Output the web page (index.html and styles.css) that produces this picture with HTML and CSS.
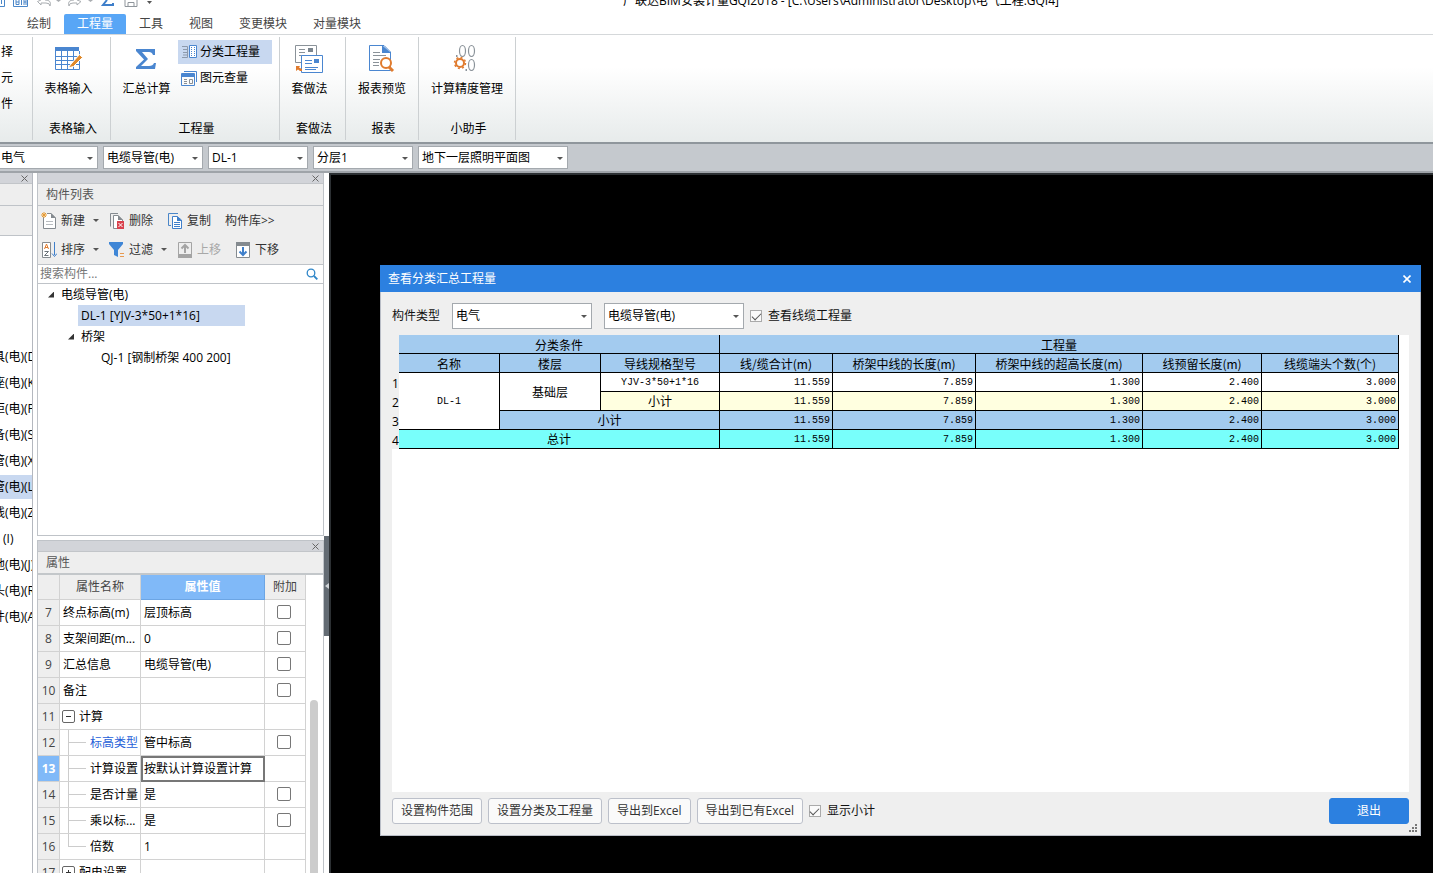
FILE: index.html
```html
<!DOCTYPE html>
<html lang="zh-CN">
<head>
<meta charset="utf-8">
<title>广联达BIM安装计量GQI2018</title>
<link rel="stylesheet" href="styles.css">
</head>
<body>
<header class="titlebar">
  <div class="quick">
    <svg width="160" height="12" viewBox="0 0 160 12" fill="none">
      <path d="M0 6.500H4.500V0M1.500 0V4" stroke="#4a86c8"/>
      <path d="M13.500 0V6.500H27.500V0" stroke="#4a86c8"/>
      <path d="M16 0V4.500H19V0M21.500 0V5M24 5V0M26 5V0M16 2H19M24 2H26" stroke="#4a86c8"/>
      <path d="M41 0L37.500 1.500L41 5V3H46Q50 3 50 6Q52 0 45 0" stroke="#a9adb1"/>
      <path d="M56 0H61L58.500 2ZM88 0H93L90.500 2Z" fill="#a9adb1"/>
      <path d="M77 0L81 1.500L77 5V3H73Q69 3 69 6Q67 0 74 0" stroke="#a9adb1"/>
      <path d="M107 0L103 5H113V3" stroke="#3f7fca" stroke-width="2"/>
      <path d="M125 0V6.500H137V0M128 6V2.500H134V6" stroke="#8f959b"/>
      <path d="M147 1H152L149.500 4Z" fill="#555"/>
    </svg>
  </div>
  <div class="title">广联达BIM安装计量GQI2018 - [C:\Users\Administrator\Desktop\电气工程.GQI4]</div>
</header>

<nav class="tabs">
  <button class="tab">绘制</button>
  <button class="tab active">工程量</button>
  <button class="tab">工具</button>
  <button class="tab">视图</button>
  <button class="tab">变更模块</button>
  <button class="tab">对量模块</button>
</nav>

<section class="ribbon">
  <div class="group g-edge">
    <button class="cut">择</button>
    <button class="cut">元</button>
    <button class="cut">件</button>
  </div>
  <div class="group g-form">
    <button class="big">
      <svg width="30" height="30" viewBox="0 0 30 30" fill="none">
        <path d="M2 3H26V7H2Z" fill="#4a86d0"/>
        <path d="M2.500 7V25.500H26.500V7M2 12.500H26M2 16.500H26M2 20.500H26M8.500 7V25M14.500 7V25M20.500 7V25" stroke="#4a86d0"/>
        <path d="M18 20L26.500 10.500L29.500 13.500L20.500 22.500L15 24Z" fill="#e08a2c" stroke="#fff"/>
      </svg>
      <span>表格输入</span>
    </button>
    <div class="group-name">表格输入</div>
  </div>
  <div class="group g-quantity">
    <div class="group-body">
      <button class="big">
        <svg width="30" height="30" viewBox="0 0 30 30"><path d="M4 5H23V11H21Q20 8 17 8H10L16 15L9 22H17Q21 22 22 19H24L23 25H4V23L12 15.500L4 7Z" fill="#4a86d0"/></svg>
        <span>汇总计算</span>
      </button>
      <div class="stack">
        <button class="small active">
          <svg width="16" height="16" viewBox="0 0 16 16" fill="none">
            <path d="M1 2.500H6.500V13.500H1M2 5.500H6M2 8.500H6M2 11H6" stroke="#8c99ab"/>
            <path d="M8.500 1.500H15.500V13.500H8.500Z" fill="#fff" stroke="#4a86d0"/>
            <path d="M10.500 3V13M13.500 3V13" stroke="#4a86d0" stroke-dasharray="1 1"/>
          </svg>
          <span>分类工程量</span>
        </button>
        <button class="small">
          <svg width="16" height="16" viewBox="0 0 16 16" fill="none">
            <path d="M3 1.500H15.500V12" stroke="#4a86d0"/>
            <path d="M.5 3.500H13.500V15.500H.5ZM1 5H13" stroke="#4a86d0"/>
            <path d="M1 4H13V7H1Z" fill="#4a86d0"/>
            <path d="M3 9.500H6M3 11.500H6M3 13.500H6M8.500 9.500H11.500V13.500H8.500Z" stroke="#8a8f94"/>
          </svg>
          <span>图元查量</span>
        </button>
      </div>
    </div>
    <div class="group-name">工程量</div>
  </div>
  <div class="group g-method">
    <button class="big">
      <svg width="30" height="30" viewBox="0 0 30 30" fill="none">
        <path d="M1.500 1.500H22.500V18.500H1.500Z" fill="#fff" stroke="#8a9299"/>
        <path d="M5 5.500H11M5 8.500H11M5 11.500H8" stroke="#8a9299"/>
        <path d="M14 4H19V8H14Z" fill="#7b858e"/>
        <path d="M7.500 11.500H28.500V28.500H7.500Z" fill="#fff" stroke="#4a86d0"/>
        <path d="M11 16.500H18M11 19.500H18M11 23.500H24M11 25.500H22" stroke="#4a86d0"/>
        <path d="M20 15H25V19H20Z" fill="#4a86d0"/>
        <path d="M2 22H6L5 23.500L8 25V27H6L4 25.500L2 27Z" fill="#e07b2e"/>
      </svg>
      <span>套做法</span>
    </button>
    <div class="group-name">套做法</div>
  </div>
  <div class="group g-report">
    <button class="big">
      <svg width="30" height="30" viewBox="0 0 30 30" fill="none">
        <path d="M2.500 1.500H17L23.500 8V26.500H2.500Z" fill="#fff" stroke="#4a86d0"/>
        <path d="M15 1L24 9H15Z" fill="#4a86d0"/>
        <path d="M6 8.500H13M6 11.500H19M6 15.500H13M6 18.500H12M6 21.500H12" stroke="#8a9299"/>
        <circle cx="19" cy="19" r="5" fill="#fff" stroke="#e07b2e" stroke-width="2"/>
        <path d="M22 23L26 27" stroke="#e07b2e" stroke-width="3"/>
      </svg>
      <span>报表预览</span>
    </button>
    <div class="group-name">报表</div>
  </div>
  <div class="group g-helper">
    <button class="big">
      <svg width="30" height="30" viewBox="0 0 30 30" fill="none">
        <path d="M4 11H5.500V13H4ZM13.500 25H15V27H13.500Z" fill="#8a9299"/>
        <ellipse cx="10.500" cy="7" rx="3" ry="5.500" stroke="#8a9299" stroke-width="1.200"/>
        <ellipse cx="19.500" cy="7" rx="3" ry="5.500" stroke="#8a9299" stroke-width="1.200"/>
        <ellipse cx="19.500" cy="21" rx="3" ry="5.500" stroke="#8a9299" stroke-width="1.200"/>
        <circle cx="8" cy="19" r="4" stroke="#e07b2e" stroke-width="2"/>
        <circle cx="8" cy="19" r="5.500" stroke="#e07b2e" stroke-width="1.500" stroke-dasharray="2 2.300"/>
      </svg>
      <span>计算精度管理</span>
    </button>
    <div class="group-name">小助手</div>
  </div>
</section>

<div class="combobar">
  <span class="combo first"><select aria-label="专业"><option>电气</option></select></span>
  <span class="combo"><select aria-label="构件类型"><option>电缆导管(电)</option></select></span>
  <span class="combo"><select aria-label="构件"><option>DL-1</option></select></span>
  <span class="combo"><select aria-label="分层"><option>分层1</option></select></span>
  <span class="combo wide"><select aria-label="图纸"><option>地下一层照明平面图</option></select></span>
</div>

<main class="workspace">
  <aside class="rail">
    <div class="dock-bar"><button class="dock-close" aria-label="关闭"><svg width="7" height="7" viewBox="0 0 7 7"><path d="M.5 .5L6.500 6.500M6.500 .5L.5 6.500" stroke="#666"/></svg></button></div>
    <div class="rail-title"></div>
    <div class="rail-tools"></div>
    <ul class="rail-list">
      <li>具(电)(D)</li>
      <li>座(电)(K)</li>
      <li>柜(电)(P)</li>
      <li>备(电)(S)</li>
      <li>管(电)(X)</li>
      <li class="selected">管(电)(L)</li>
      <li>线(电)(Z)</li>
      <li class="short">(I)</li>
      <li>地(电)(J)</li>
      <li>头(电)(R)</li>
      <li>件(电)(A)</li>
    </ul>
  </aside>

  <div class="docks">
    <section class="panel components">
      <div class="dock-bar"><button class="dock-close" aria-label="关闭"><svg width="7" height="7" viewBox="0 0 7 7"><path d="M.5 .5L6.500 6.500M6.500 .5L.5 6.500" stroke="#666"/></svg></button></div>
      <h2 class="panel-title">构件列表</h2>
      <div class="tools">
        <button class="tool t-wide">
          <svg width="16" height="18" viewBox="0 0 16 18" fill="none">
            <path d="M2.500 5V16.500H14.500V6L10 1.500H6" fill="#fff" stroke="#858b90"/>
            <path d="M10 1V6H15Z" fill="#858b90"/><path d="M5 9.500H12M5 12.500H12" stroke="#b8bcc0"/>
            <path d="M3 0V6M0 3H6M1 1L5 5M5 1L1 5" stroke="#e89a30"/>
          </svg>
          <span>新建</span><i class="arrow"></i>
        </button>
        <button class="tool">
          <svg width="16" height="18" viewBox="0 0 16 18" fill="none">
            <path d="M1.500 14.500V1.500H9" stroke="#858b90"/>
            <path d="M4.500 3.500H9L13.500 8V16.500H4.500Z" fill="#fff" stroke="#858b90"/>
            <path d="M9 3V8H14Z" fill="#858b90"/>
            <path d="M8 9H15V17H8Z" fill="#d9424d"/><path d="M9.500 11L13.500 15M13.500 11L9.500 15" stroke="#fff"/>
          </svg>
          <span>删除</span>
        </button>
        <button class="tool t-copy">
          <svg width="16" height="18" viewBox="0 0 16 18" fill="none">
            <path d="M4 13.500H1.500V1.500H11" stroke="#4a86c8"/>
            <path d="M5.500 4.500H10L14.500 8V16.500H5.500Z" fill="#fff" stroke="#3f7fca"/>
            <path d="M10 4V9H15Z" fill="#3f7fca"/><path d="M7 10.500H13M7 12.500H13M7 14.500H13" stroke="#3f7fca"/>
          </svg>
          <span>复制</span>
        </button>
        <button class="tool">构件库&gt;&gt;</button>
      </div>
      <div class="tools">
        <button class="tool t-wide">
          <svg width="16" height="18" viewBox="0 0 16 18" fill="none">
            <path d="M1.500 1.500H9.500V16.500H1.500Z" fill="#fff" stroke="#858b90"/>
            <path d="M3.500 8L5.500 3L7.500 8M4 6.500H7" stroke="#e07b2e"/><path d="M3.500 10.500H7.500L3.500 14.500H7.500" stroke="#6d747a"/>
            <path d="M13.500 1V14M11 12.500L13.500 15.500L16 12.500" stroke="#3f7fca"/>
          </svg>
          <span>排序</span><i class="arrow"></i>
        </button>
        <button class="tool t-filter">
          <svg width="16" height="18" viewBox="0 0 16 18" fill="none">
            <path d="M0 1H14V3L9 9V16L5 14V9L0 3Z" fill="#3f86d6"/><path d="M11 12.500H15M11 15.500H15" stroke="#e89a50"/>
          </svg>
          <span>过滤</span><i class="arrow"></i>
        </button>
        <button class="tool t-up" disabled>
          <svg width="16" height="18" viewBox="0 0 16 18" fill="none">
            <path d="M1.500 1.500H14.500V14H1.500Z" stroke="#a4a4a4"/><path d="M1 13H15V17H1Z" fill="#a4a4a4"/>
            <path d="M8 12V4M4.500 7.500L8 4L11.500 7.500" stroke="#a4a4a4" stroke-width="2"/>
          </svg>
          <span>上移</span>
        </button>
        <button class="tool">
          <svg width="16" height="18" viewBox="0 0 16 18" fill="none">
            <path d="M1.500 3.500H14.500V16.500H1.500Z" fill="#fff" stroke="#858b90"/><path d="M1 1H15V5H1Z" fill="#858b90"/>
            <path d="M8 6V14M4.500 10.500L8 14L11.500 10.500" stroke="#3f7fca" stroke-width="2"/>
          </svg>
          <span>下移</span>
        </button>
      </div>
      <label class="search">
        <input type="text" placeholder="搜索构件..." aria-label="搜索构件">
        <svg width="12" height="12" viewBox="0 0 12 12" fill="none"><circle cx="5" cy="5" r="3.800" stroke="#2f86c8" stroke-width="1.300"/><path d="M8 8L11.300 11.300" stroke="#2f86c8" stroke-width="1.800"/></svg>
      </label>
      <ul class="tree">
        <li class="lv1"><i class="fold"></i><span>电缆导管(电)</span></li>
        <li class="lv2"><span class="picked">DL-1 [YJV-3*50+1*16]</span></li>
        <li class="lv2b"><i class="fold"></i><span>桥架</span></li>
        <li class="lv3"><span>QJ-1 [钢制桥架 400 200]</span></li>
      </ul>
    </section>

    <section class="panel props">
      <div class="dock-bar"><button class="dock-close" aria-label="关闭"><svg width="7" height="7" viewBox="0 0 7 7"><path d="M.5 .5L6.500 6.500M6.500 .5L.5 6.500" stroke="#666"/></svg></button></div>
      <h2 class="panel-title">属性</h2>
      <div class="props-body">
        <table class="grid">
          <colgroup><col class="c-num"><col class="c-name"><col class="c-value"><col class="c-extra"></colgroup>
          <thead><tr><th></th><th>属性名称</th><th class="hot">属性值</th><th>附加</th></tr></thead>
          <tbody>
            <tr><th>7</th><td>终点标高(m)</td><td>层顶标高</td><td class="tick"><input type="checkbox" aria-label="终点标高附加"></td></tr>
            <tr><th>8</th><td>支架间距(m...</td><td>0</td><td class="tick"><input type="checkbox" aria-label="支架间距附加"></td></tr>
            <tr><th>9</th><td>汇总信息</td><td>电缆导管(电)</td><td class="tick"><input type="checkbox" aria-label="汇总信息附加"></td></tr>
            <tr><th>10</th><td>备注</td><td></td><td class="tick"><input type="checkbox" aria-label="备注附加"></td></tr>
            <tr><th>11</th><td><div class="node"><button class="toggle minus" aria-label="折叠"></button>计算</div></td><td></td><td></td></tr>
            <tr><th>12</th><td class="link"><div class="node"><i class="branch"></i>标高类型</div></td><td>管中标高</td><td class="tick"><input type="checkbox" aria-label="标高类型附加"></td></tr>
            <tr><th class="hot">13</th><td><div class="node"><i class="branch"></i>计算设置</div></td><td class="focus">按默认计算设置计算</td><td></td></tr>
            <tr><th>14</th><td><div class="node"><i class="branch"></i>是否计量</div></td><td>是</td><td class="tick"><input type="checkbox" aria-label="是否计量附加"></td></tr>
            <tr><th>15</th><td><div class="node"><i class="branch"></i>乘以标...</div></td><td>是</td><td class="tick"><input type="checkbox" aria-label="乘以标附加"></td></tr>
            <tr><th>16</th><td><div class="node"><i class="branch last"></i>倍数</div></td><td>1</td><td></td></tr>
            <tr><th>17</th><td><div class="node"><button class="toggle plus" aria-label="展开"></button>配电设置</div></td><td></td><td></td></tr>
          </tbody>
        </table>
        <div class="scroll"><div class="thumb"></div></div>
      </div>
    </section>
  </div>

  <div class="splitter"><div class="grip"></div></div>

  <div class="canvas">
    <section class="dialog" role="dialog" aria-labelledby="dlg-title">
      <header class="dialog-head">
        <h1 id="dlg-title">查看分类汇总工程量</h1>
        <button class="dialog-close" aria-label="关闭"><svg width="8" height="8" viewBox="0 0 8 8"><path d="M.5 .5L7.500 7.500M7.500 .5L.5 7.500" stroke="#fff" stroke-width="1.600"/></svg></button>
      </header>
      <div class="filters">
        <label for="kind">构件类型</label>
        <span class="combo tall major"><select id="kind"><option>电气</option></select></span>
        <span class="combo tall"><select aria-label="构件"><option>电缆导管(电)</option></select></span>
        <label class="check"><input type="checkbox" checked><span>查看线缆工程量</span></label>
      </div>
      <div class="sheet">
        <table class="report">
          <colgroup><col class="r-num"><col class="r-a"><col class="r-a"><col class="r-b"><col class="r-c"><col class="r-d"><col class="r-e"><col class="r-b"><col class="r-f"></colgroup>
          <thead>
            <tr><td class="no"></td><th colspan="3">分类条件</th><th colspan="5">工程量</th></tr>
            <tr><td class="no"></td><th>名称</th><th>楼层</th><th>导线规格型号</th><th>线/缆合计(m)</th><th>桥架中线的长度(m)</th><th>桥架中线的超高长度(m)</th><th>线预留长度(m)</th><th>线缆端头个数(个)</th></tr>
          </thead>
          <tbody>
            <tr><td class="no">1</td><td class="mono" rowspan="3">DL-1</td><td rowspan="2">基础层</td><td class="mono">YJV-3*50+1*16</td><td class="n">11.559</td><td class="n">7.859</td><td class="n">1.300</td><td class="n">2.400</td><td class="n">3.000</td></tr>
            <tr class="sub"><td class="no">2</td><td>小计</td><td class="n">11.559</td><td class="n">7.859</td><td class="n">1.300</td><td class="n">2.400</td><td class="n">3.000</td></tr>
            <tr class="floor"><td class="no">3</td><td colspan="2">小计</td><td class="n">11.559</td><td class="n">7.859</td><td class="n">1.300</td><td class="n">2.400</td><td class="n">3.000</td></tr>
            <tr class="total"><td class="no">4</td><td colspan="3">总计</td><td class="n">11.559</td><td class="n">7.859</td><td class="n">1.300</td><td class="n">2.400</td><td class="n">3.000</td></tr>
          </tbody>
        </table>
      </div>
      <footer class="actions">
        <button class="btn">设置构件范围</button>
        <button class="btn">设置分类及工程量</button>
        <button class="btn">导出到Excel</button>
        <button class="btn">导出到已有Excel</button>
        <label class="check"><input type="checkbox" checked><span>显示小计</span></label>
        <button class="btn primary">退出</button>
      </footer>
      <svg class="resize" width="8" height="8" viewBox="0 0 8 8" fill="#777"><path d="M6 0h2v2h-2zM3 3h2v2h-2zM6 3h2v2h-2zM0 6h2v2h-2zM3 6h2v2h-2zM6 6h2v2h-2z"/></svg>
    </section>
  </div>
</main>
</body>
</html>
```
FILE: styles.css
```css
* { box-sizing: border-box; }

body {
  margin: 0;
  height: 100vh;
  overflow: hidden;
  display: flex;
  flex-direction: column;
  background: #fff;
  color: #1a1a1a;
  font: 12px/18px "Open Sans", "Noto Sans CJK SC", sans-serif;
}

button, input, select {
  font: inherit;
  color: inherit;
  margin: 0;
  padding: 0;
  border: 0;
  background: none;
}

h1, h2 { margin: 0; font-size: 12px; font-weight: 400; }
ul { margin: 0; padding: 0; list-style: none; }
svg { display: block; flex: none; }

/* title bar and tabs */
.titlebar { display: flex; height: 14px; overflow: hidden; flex: none; }
.quick { width: 623px; flex: none; }
.title { margin-top: -8px; white-space: nowrap; color: #000; }

.tabs { display: flex; flex: none; padding-left: 14px; border-bottom: 1px solid #d5d8da; }
.tab { height: 20px; padding: 0 13px; line-height: 20px; color: #444; }
.tab.active { background: #58a6f6; color: #fff; border-radius: 2px 2px 0 0; }

/* ribbon */
.ribbon {
  display: flex;
  flex: none;
  height: 109px;
  padding: 2px 0;
  background: linear-gradient(#fff 30%, #e7ebeb);
  border-bottom: 2px solid #8f969c;
  color: #000;
}
.group {
  display: flex;
  flex-direction: column;
  justify-content: space-between;
  align-items: center;
  border-right: 1px solid #ccd0d2;
}
.group-body { display: flex; align-self: flex-start; }
.group-name { height: 20px; line-height: 18px; padding-left: 3px; }
.big { display: flex; flex-direction: column; align-items: center; padding-top: 7px; gap: 6px; }
.g-edge { width: 33px; align-items: flex-start; justify-content: flex-start; gap: 8px; padding-top: 6px; }
.cut { height: 18px; margin-left: 1px; }
.g-form { width: 78px; }
.g-form .big { margin-right: 6px; }
.g-quantity { width: 169px; }
.g-quantity .big { width: 67px; padding-left: 4px; }
.g-method { width: 66px; }
.g-method .big { margin-right: 6px; }
.g-report { width: 73px; }
.g-helper { width: 97px; }
.stack { display: flex; flex-direction: column; padding-top: 3px; gap: 2px; width: 94px; }
.small { display: flex; align-items: center; height: 24px; padding-left: 3px; gap: 3px; }
.small.active { background: #c8d8f0; }

/* drop-downs */
.combobar {
  display: flex;
  flex: none;
  gap: 5px;
  padding: 2px 0;
  background: #c5c9ce;
  border-bottom: 2px solid #9fa4a9;
}
.combo { position: relative; width: 100px; height: 23px; border: 1px solid #a4a9ae; background: #fff; color: #000; }
.combo.first { width: 98px; border-left: 0; }
.combo.wide { width: 150px; }
.combo select { display: block; width: 100%; height: 100%; padding-left: 3px; appearance: none; outline: 0; }
.combo.first select { padding-left: 1px; }
.combo::after {
  content: "";
  position: absolute;
  right: 4px;
  top: calc(50% - 1px);
  border: 3px solid transparent;
  border-top-color: #555;
  border-bottom: 0;
}
.combo.tall { width: 140px; height: 26px; }
.combo.major { margin-right: 6px; }

/* docked panels */
.workspace { display: flex; flex: 1; min-height: 0; }
.dock-bar { display: flex; justify-content: flex-end; height: 11px; flex: none; background: #d2d4d9; border-bottom: 1px solid #c2c5c9; }
.dock-close { display: grid; place-items: center; width: 16px; }
.rail { width: 33px; flex: none; overflow: hidden; border-right: 1px solid #b4b8bf; color: #000; }
.rail-title { height: 22px; background: #eee; border-bottom: 1px solid #bfc3c8; }
.rail-tools { height: 30px; background: #eee; border-bottom: 1px solid #bfc3c8; }
.rail-list { padding-top: 109px; }
.rail-list li { height: 24px; line-height: 24px; margin-bottom: 2px; text-indent: -7px; white-space: nowrap; }
.rail-list .short { text-indent: 3px; }
.rail-list .selected { background: #c8d8f0; }

.docks { display: flex; flex-direction: column; width: 287px; margin-left: 4px; flex: none; gap: 4px; }
.panel { display: flex; flex-direction: column; border: 1px solid #bfc3c8; border-top: 0; }
.components { height: 363px; flex: none; background: #eee; }
.props { flex: 1; min-height: 0; border-top: 1px solid #bfc3c8; border-bottom: 0; }
.panel-title { flex: none; height: 22px; padding-left: 8px; line-height: 21px; background: #eee; color: #555; border-bottom: 1px solid #bfc3c8; }
.props .panel-title { height: 23px; border-bottom: 2px solid #c3c7ca; }

.tools { display: flex; align-items: center; height: 29px; padding-left: 3px; color: #333; }
.tool { display: flex; align-items: center; gap: 4px; white-space: nowrap; }
.t-wide { width: 68px; }
.tools .t-wide + .tool { width: 58px; }
.tools .t-copy { width: 58px; }
.tools .t-wide + .t-filter { width: 68px; }
.tools .t-up { width: 58px; color: #a8a8a8; }
.arrow { margin-left: 4px; border: 3px solid transparent; border-top-color: #555; border-bottom: 0; }

.search { display: flex; align-items: center; flex: none; height: 20px; padding: 0 5px 0 2px; background: #fff; border: solid #bfc3c8; border-width: 1px 0; }
.search input { flex: 1; min-width: 0; outline: 0; }
.search input::placeholder { color: #777; opacity: 1; }

.tree { flex: 1; background: #fff; color: #000; }
.tree li { display: flex; align-items: center; height: 21px; }
.fold { width: 6px; height: 6px; margin-right: 7px; background: #333; clip-path: polygon(100% 0, 100% 100%, 0 100%); }
.lv1 { padding-left: 10px; }
.lv2 { padding-left: 40px; }
.lv2b { padding-left: 30px; }
.lv3 { padding-left: 63px; }
.picked { width: 167px; line-height: 21px; padding-left: 3px; background: #c8d8f0; }

/* property grid */
.props-body { display: flex; flex: 1; min-height: 0; overflow: hidden; }
.grid { width: 268px; table-layout: fixed; border-collapse: separate; border-spacing: 0; flex: none; align-self: flex-start; }
.c-num { width: 22px; }
.c-name { width: 81px; }
.c-value { width: 124px; }
.c-extra { width: 41px; }
.grid th, .grid td { height: 26px; padding: 0 0 0 3px; border: solid #d2d2d2; border-width: 0 1px 1px 0; font-weight: 400; text-align: left; white-space: nowrap; overflow: hidden; line-height: 18px; color: #000; }
.grid th { padding: 0; text-align: center; background: #eee; color: #444; }
.grid thead th { height: 25px; }
.grid .hot { background: #80b9f8; color: #fff; font-weight: 700; }
.grid thead .hot { border-color: #6ca5e4; }
.grid .link { color: #2560d8; }
.grid .focus { border: 2px solid #777; padding-left: 1px; }
.grid .tick { padding: 0; text-align: center; }
.tick input { display: block; width: 14px; height: 14px; margin: 0 auto 2px 12px; appearance: none; border: 1px solid #777; border-radius: 2px; background: #fff; }
.node { display: flex; align-items: center; height: 25px; }
.toggle { width: 13px; height: 13px; margin: 0 4px 0 -1px; border: 1px solid #666; border-radius: 2px; background: linear-gradient(#333, #333) center / 5px 1px no-repeat; flex: none; }
.toggle.plus { background: linear-gradient(#333, #333) center / 5px 1px no-repeat, linear-gradient(#333, #333) center / 1px 5px no-repeat; }
.branch { width: 18px; height: 25px; margin: 0 4px 0 5px; flex: none; background: linear-gradient(#ccc, #ccc) 0 0 / 1px 100% no-repeat, linear-gradient(#ccc, #ccc) 0 12px / 100% 1px no-repeat; }
.branch.last { background: linear-gradient(#ccc, #ccc) 0 0 / 1px 12px no-repeat, linear-gradient(#ccc, #ccc) 0 12px / 100% 1px no-repeat; }
.scroll { flex: 1; padding: 125px 4px 0; }
.thumb { width: 8px; height: 100%; border-radius: 4px 4px 0 0; background: #ccc; }

.splitter { width: 5px; flex: none; padding-top: 363px; }
.grip { display: flex; align-items: center; height: 100px; background: #636b73; }
.grip::after { content: ""; margin-left: 1px; border: 3px solid transparent; border-right: 4px solid #d0d4d8; border-left: 0; }

/* drawing area and dialog */
.canvas { position: relative; flex: 1; background: #000; border: solid #2c3033; border-width: 2px 0 0 2px; }
.dialog {
  position: absolute;
  inset: 90px 12px 37px 49px;
  display: flex;
  flex-direction: column;
  background: #efefef;
  border: 1px solid #b9bdc6;
  border-top: 0;
  color: #111;
}
.dialog-head { display: flex; justify-content: space-between; align-items: center; height: 27px; flex: none; margin: 0 -1px; padding: 0 5px 0 8px; background: #2c80e0; color: #fff; }
.dialog-close { padding: 5px; }
.filters { display: flex; align-items: center; padding: 11px 11px 6px; gap: 6px; }
.filters > label:first-child { margin-right: 6px; }
.check { display: flex; align-items: center; gap: 6px; }
.check input { display: grid; place-items: center; width: 12px; height: 12px; appearance: none; border: 1px solid #aaa; background: #fafafa; }
.check input::before { content: ""; width: 8px; height: 4px; margin-bottom: 2px; border: solid #555; border-width: 0 0 1px 1px; transform: rotate(-45deg); }
.sheet { flex: 1; min-height: 0; margin: 0 11px; background: #fff; }

.report { width: 1007px; table-layout: fixed; border-collapse: separate; border-spacing: 0; color: #000; }
.r-num { width: 7px; }
.r-a { width: 101px; }
.r-b { width: 119px; }
.r-c { width: 113px; }
.r-d { width: 143px; }
.r-e { width: 167px; }
.r-f { width: 137px; }
.report th, .report td { height: 19px; padding: 2px 0 0; border: solid #000; border-width: 0 1px 1px 0; line-height: 16px; font-weight: 400; text-align: center; white-space: nowrap; background: #fff; }
.report th { background: #a3cbef; font-family: "Noto Sans CJK SC", sans-serif; }
.report .sub td { background: #ffffe0; }
.report .floor td { background: #a3cbef; }
.report .total td { background: #78fffb; }
.report tr .no { border-color: transparent; border-width: 0; background: #efefef; }
.report .n, .report .mono { font-family: "Liberation Mono", monospace; font-size: 10px; }
.report .n { text-align: right; padding-right: 2px; }

.actions { display: flex; align-items: center; gap: 6px; padding: 6px 11px 11px; }
.btn { height: 26px; padding: 0 8px; border: 1px solid #bcc0ca; border-radius: 3px; background: #fafafa; white-space: nowrap; color: #333; }
.btn.primary { width: 80px; margin-left: auto; background: #2c80e0; border-color: #2c80e0; color: #fff; }
.resize { position: absolute; right: 3px; bottom: 3px; }
```
